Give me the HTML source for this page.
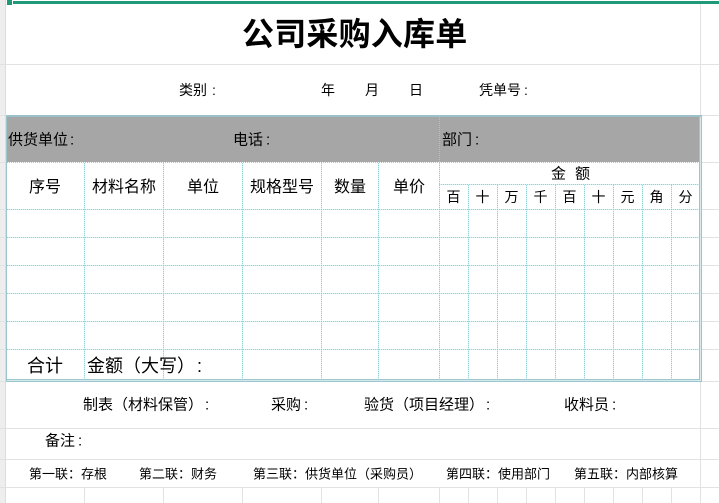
<!DOCTYPE html>
<html lang="zh">
<head>
<meta charset="utf-8">
<style>
html,body{margin:0;padding:0;background:#fff}
#p{position:relative;width:719px;height:503px;overflow:hidden;background:#fff;font-family:"Liberation Sans","Noto Sans CJK SC",sans-serif;color:#000}
svg{position:absolute;left:0;top:0}
.t{position:absolute;white-space:pre;line-height:1;transform:translateY(-50%)}
.c{position:absolute;width:29px;text-align:center;font-size:14px;line-height:1;top:190px}
.f13{font-size:13px}.f14{font-size:14px}.f15{font-size:15px}.f16{font-size:16px}.f18{font-size:18px}
i{font-style:normal;margin-left:3px}
</style>
</head>
<body>
<div id="p">
<svg width="719" height="503" viewBox="0 0 719 503" shape-rendering="crispEdges">
<rect x="0" y="0" width="6" height="503" fill="#eeeeee"/>
<rect x="5" y="0" width="1" height="503" fill="#dcdcdc"/>
<g fill="#e2e2e2">
<rect x="0" y="64" width="719" height="1"/>
<rect x="0" y="115" width="719" height="1"/>
<rect x="0" y="162" width="719" height="1"/>
<rect x="0" y="209" width="719" height="1"/>
<rect x="0" y="237" width="719" height="1"/>
<rect x="0" y="265" width="719" height="1"/>
<rect x="0" y="293" width="719" height="1"/>
<rect x="0" y="321" width="719" height="1"/>
<rect x="0" y="349" width="719" height="1"/>
<rect x="0" y="381" width="719" height="1"/>
<rect x="0" y="428" width="719" height="1"/>
<rect x="0" y="459" width="719" height="1"/>
<rect x="0" y="487" width="719" height="1"/>
<rect x="700" y="4" width="1" height="499"/>
<rect x="84" y="487" width="1" height="16"/><rect x="163" y="487" width="1" height="16"/>
<rect x="242" y="487" width="1" height="16"/><rect x="321" y="487" width="1" height="16"/>
<rect x="378" y="487" width="1" height="16"/><rect x="439" y="487" width="1" height="16"/>
<rect x="468" y="487" width="1" height="16"/><rect x="497" y="487" width="1" height="16"/>
<rect x="526" y="487" width="1" height="16"/><rect x="555" y="487" width="1" height="16"/>
<rect x="584" y="487" width="1" height="16"/><rect x="613" y="487" width="1" height="16"/>
<rect x="642" y="487" width="1" height="16"/><rect x="671" y="487" width="1" height="16"/>
</g>
<rect x="13" y="1" width="706" height="3" fill="#1f9a78"/>
<rect x="7" y="0" width="5" height="5" fill="#1f9a78"/>
<rect x="7" y="116" width="693" height="265" fill="#fff"/>
<rect x="7" y="117" width="692" height="45" fill="#a6a6a6"/>
<g stroke="#d8f2f4" stroke-width="1" fill="none">
<path d="M84.5 163V379M163.5 163V379M242.5 163V379M321.5 163V379M378.5 163V379M439.5 163V379"/>
<path d="M468.5 185V379M497.5 185V379M526.5 185V379M555.5 185V379M584.5 185V379M613.5 185V379M642.5 185V379M671.5 185V379"/>
<path d="M7 209.5H699M439 184.5H699M7 237.5H699M7 265.5H699M7 293.5H699M7 321.5H699M7 349.5H699"/>
</g>
<g stroke="#8ed3d9" stroke-width="1" stroke-dasharray="1 1" fill="none" shape-rendering="geometricPrecision">
<path d="M84.5 163V379M163.5 163V379M242.5 163V379M321.5 163V379M378.5 163V379"/>
<path d="M439.5 117V379"/>
<path d="M468.5 185V379M497.5 185V379M526.5 185V379M555.5 185V379M584.5 185V379M613.5 185V379M642.5 185V379M671.5 185V379"/>
<path d="M7 162.5H699M439 184.5H699M7 209.5H699M7 237.5H699M7 265.5H699M7 293.5H699M7 321.5H699M7 349.5H699"/>
</g>
<rect x="6" y="115" width="696" height="2" fill="#9cc0c9"/>
<rect x="7" y="380" width="694" height="1" fill="#d6eaee"/>
<rect x="700" y="117" width="1" height="264" fill="#d6eaee"/>
<g fill="#9cc6ce">
<rect x="6" y="379" width="694" height="1"/>
<rect x="6" y="381" width="696" height="1"/>
<rect x="6" y="115" width="1" height="267"/>
<rect x="699" y="115" width="1" height="265"/>
<rect x="701" y="115" width="1" height="267"/>
</g>
</svg>

<div class="t" style="left:242px;top:34px;font-size:32px;font-weight:bold;letter-spacing:.2px">公司采购入库单</div>

<div class="t f14" style="left:179px;top:90px">类别</div>
<div class="t f14" style="left:212px;top:90px">:</div>
<div class="t f14" style="left:321px;top:90px">年</div>
<div class="t f14" style="left:365px;top:90px">月</div>
<div class="t f14" style="left:409px;top:90px">日</div>
<div class="t f14" style="left:479px;top:90px">凭单号<i>:</i></div>

<div class="t f15" style="left:8px;top:140px">供货单位<i style="margin-left:2px">:</i></div>
<div class="t f15" style="left:233px;top:140px">电话<i>:</i></div>
<div class="t f15" style="left:442px;top:140px">部门<i>:</i></div>

<div class="t f16" style="left:29px;top:188px">序号</div>
<div class="t f16" style="left:92px;top:188px">材料名称</div>
<div class="t f16" style="left:187px;top:188px">单位</div>
<div class="t f16" style="left:250px;top:188px">规格型号</div>
<div class="t f16" style="left:334px;top:188px">数量</div>
<div class="t f16" style="left:393px;top:188px">单价</div>

<div class="t f15" style="left:551px;top:174px">金</div>
<div class="t f15" style="left:575px;top:174px">额</div>

<div class="c" style="left:439px">百</div>
<div class="c" style="left:468px">十</div>
<div class="c" style="left:497px">万</div>
<div class="c" style="left:526px">千</div>
<div class="c" style="left:555px">百</div>
<div class="c" style="left:584px">十</div>
<div class="c" style="left:613px">元</div>
<div class="c" style="left:642px">角</div>
<div class="c" style="left:671px">分</div>

<div class="t f18" style="left:27px;top:366px">合计</div>
<div class="t f18" style="left:87px;top:366px">金额（大写）</div>
<div class="t f18" style="left:197px;top:366px">:</div>

<div class="t f15" style="left:83px;top:405px">制表（材料保管）</div>
<div class="t f15" style="left:205px;top:405px">:</div>
<div class="t f15" style="left:271px;top:405px">采购<i>:</i></div>
<div class="t f15" style="left:364px;top:405px">验货（项目经理）</div>
<div class="t f15" style="left:486px;top:405px">:</div>
<div class="t f15" style="left:564px;top:405px">收料员<i>:</i></div>

<div class="t f15" style="left:45px;top:441px">备注<i>:</i></div>

<div class="t f13" style="left:29px;top:474px">第一联：存根</div>
<div class="t f13" style="left:139px;top:474px">第二联：财务</div>
<div class="t f13" style="left:253px;top:474px">第三联：供货单位（采购员）</div>
<div class="t f13" style="left:446px;top:474px">第四联：使用部门</div>
<div class="t f13" style="left:574px;top:474px">第五联：内部核算</div>
</div>
</body>
</html>
